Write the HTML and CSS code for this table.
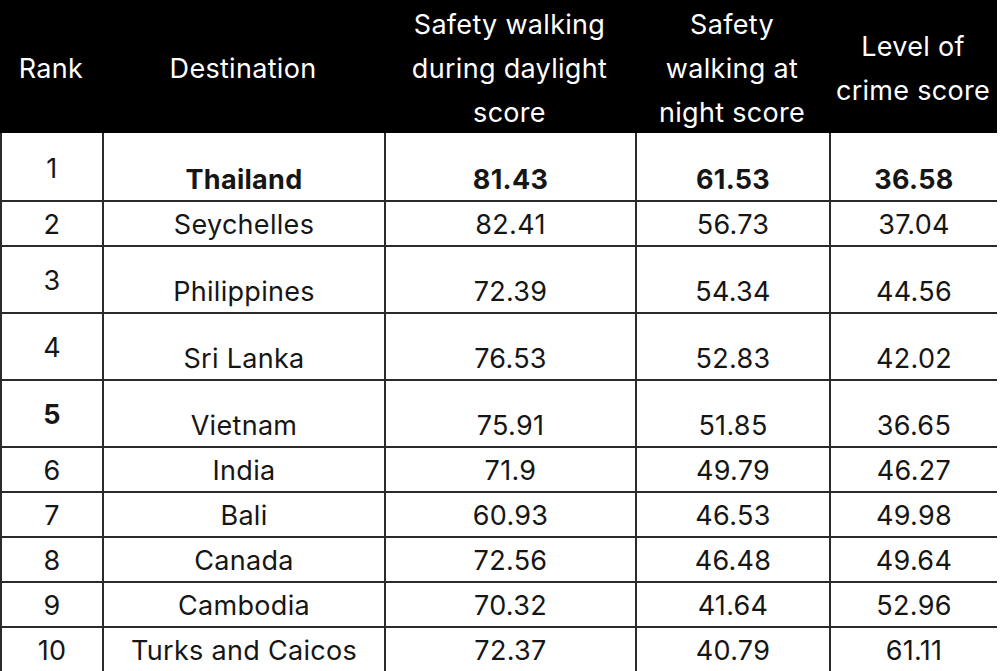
FILE: index.html
```html
<!DOCTYPE html>
<html>
<head>
<meta charset="utf-8">
<link rel="stylesheet" href="styles.css">
</head>
<body>
<div class="table">
  <div class="hcell">Rank</div>
  <div class="hcell">Destination</div>
  <div class="hcell">Safety walking<br>during daylight<br>score</div>
  <div class="hcell">Safety<br>walking at<br>night score</div>
  <div class="hcell">Level of<br>crime score</div>

  <div class="cell first top">1</div>
  <div class="cell top low b">Thailand</div>
  <div class="cell top low b">81.43</div>
  <div class="cell top low b">61.53</div>
  <div class="cell top low b">36.58</div>

  <div class="cell first">2</div>
  <div class="cell">Seychelles</div>
  <div class="cell">82.41</div>
  <div class="cell">56.73</div>
  <div class="cell">37.04</div>

  <div class="cell first">3</div>
  <div class="cell low">Philippines</div>
  <div class="cell low">72.39</div>
  <div class="cell low">54.34</div>
  <div class="cell low">44.56</div>

  <div class="cell first">4</div>
  <div class="cell low">Sri Lanka</div>
  <div class="cell low">76.53</div>
  <div class="cell low">52.83</div>
  <div class="cell low">42.02</div>

  <div class="cell first b">5</div>
  <div class="cell low">Vietnam</div>
  <div class="cell low">75.91</div>
  <div class="cell low">51.85</div>
  <div class="cell low">36.65</div>

  <div class="cell first">6</div>
  <div class="cell">India</div>
  <div class="cell">71.9</div>
  <div class="cell">49.79</div>
  <div class="cell">46.27</div>

  <div class="cell first">7</div>
  <div class="cell">Bali</div>
  <div class="cell">60.93</div>
  <div class="cell">46.53</div>
  <div class="cell">49.98</div>

  <div class="cell first">8</div>
  <div class="cell">Canada</div>
  <div class="cell">72.56</div>
  <div class="cell">46.48</div>
  <div class="cell">49.64</div>

  <div class="cell first">9</div>
  <div class="cell">Cambodia</div>
  <div class="cell">70.32</div>
  <div class="cell">41.64</div>
  <div class="cell">52.96</div>

  <div class="cell first">10</div>
  <div class="cell">Turks and Caicos</div>
  <div class="cell">72.37</div>
  <div class="cell">40.79</div>
  <div class="cell">61.11</div>
</div>
</body>
</html>
```
FILE: styles.css
```css
* { box-sizing: border-box; }
html, body { margin: 0; padding: 0; background: #fff; }
body {
  font-family: Inter, "Noto Sans", sans-serif;
  font-size: 27px;
  letter-spacing: 0.3px;
  color: #161616;
}
.table {
  width: 997px;
  display: grid;
  grid-template-columns: 102px 282px 251px 194px 168px;
  grid-template-rows: 133px 67px 45px 67px 67px 67px 45px 45px 45px 45px 45px;
}
.hcell {
  background: #000;
  color: #fff;
  display: flex;
  align-items: center;
  justify-content: center;
  text-align: center;
  line-height: 44px;
  padding-top: 5px;
  white-space: nowrap;
}
.cell {
  display: flex;
  align-items: center;
  justify-content: center;
  text-align: center;
  border-left: 2px solid #2b2b2b;
  border-top: 2px solid #2b2b2b;
  line-height: 30px;
  padding-top: 2px;
  white-space: nowrap;
}
.cell.top { border-top: none; padding-top: 4px; }
.cell.low { padding-top: 24px; }
.cell.top.low { padding-top: 26px; }
.b { font-weight: 700; }
```
